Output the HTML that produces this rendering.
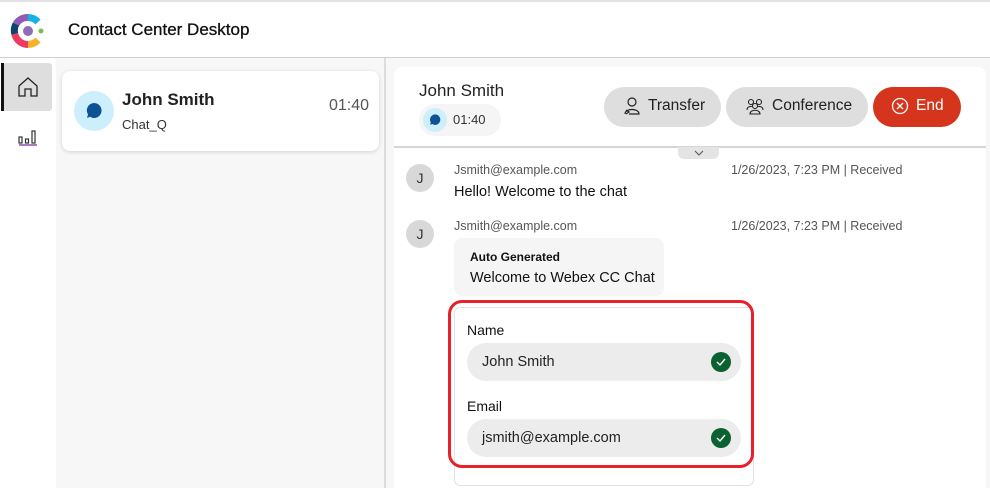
<!DOCTYPE html>
<html><head><meta charset="utf-8"><style>
*{box-sizing:border-box;margin:0;padding:0}
body{width:990px;height:488px;overflow:hidden;background:#fff;font-family:"Liberation Sans",Arial,sans-serif;color:#121212;position:relative}
.abs{position:absolute}
</style></head><body>
<div class="abs" style="left:0;top:0;width:990px;height:2px;background:#e2e2e2"></div>
<svg class="abs" style="left:10px;top:13px" width="36" height="36" viewBox="0 0 36 36">
<path d="M18 4.5 A13.5 13.5 0 0 0 6 11" stroke="#8e5cb3" stroke-width="7" fill="none"/>
<path d="M18 4.5 A13.5 13.5 0 0 1 28 9" stroke="#17b3e0" stroke-width="7" fill="none"/>
<path d="M6 11 A13.5 13.5 0 0 0 4.8 21" stroke="#10436b" stroke-width="7" fill="none"/>
<path d="M4.8 21 A13.5 13.5 0 0 0 18 31.5" stroke="#ee3a63" stroke-width="7" fill="none"/>
<path d="M18 31.5 A13.5 13.5 0 0 0 28 27" stroke="#f6b22b" stroke-width="7" fill="none"/>
<circle cx="18" cy="18" r="5" fill="#8e6cb8"/><circle cx="31" cy="18" r="2.5" fill="#76c14a"/>
</svg>
<div class="abs" style="left:68px;top:20px;font-size:17px;color:#111;-webkit-text-stroke:0.3px #111">Contact Center Desktop</div>
<div class="abs" style="left:0;top:57px;width:990px;height:1px;background:#d0d0d0"></div>
<div class="abs" style="left:3px;top:63px;width:49px;height:48px;background:#dedede;border-radius:3px"></div>
<div class="abs" style="left:1px;top:63px;width:3px;height:48px;background:#111"></div>
<svg class="abs" style="left:17px;top:76px" width="22" height="22" viewBox="0 0 22 22"><path d="M2 10 L11 2 L20 10 V20 H14 V13 H8 V20 H2 Z" fill="none" stroke="#222" stroke-width="1.3"/></svg>
<svg class="abs" style="left:18px;top:128px" width="20" height="18" viewBox="0 0 20 18"><g fill="none" stroke="#333" stroke-width="1.2"><rect x="1" y="9" width="3" height="6"/><rect x="7.5" y="11" width="3" height="4"/><rect x="14" y="3" width="3" height="12"/></g><path d="M1 17 H19" stroke="#7a2b9a" stroke-width="1.3"/></svg>
<div class="abs" style="left:56px;top:58px;width:328px;height:430px;background:#f7f7f7"></div>
<div class="abs" style="left:384px;top:58px;width:2px;height:430px;background:#dcdcdc"></div>
<div class="abs" style="left:62px;top:71px;width:317px;height:80px;background:#fff;border-radius:8px;box-shadow:0 1px 4px rgba(0,0,0,.15)"></div>
<div class="abs" style="left:74px;top:91px;width:40px;height:40px;border-radius:50%;background:#cdeefc"></div>
<svg class="abs" style="left:84px;top:101px" width="20" height="20" viewBox="0 0 20 20"><path d="M10 2 A7.5 7.5 0 1 1 6 15.8 L3 17 L4 13.5 A7.5 7.5 0 0 1 10 2Z" fill="#0b5394"/></svg>
<div class="abs" style="left:122px;top:90px;font-size:17px;font-weight:bold;color:#222">John Smith</div>
<div class="abs" style="left:122px;top:117px;font-size:13px;color:#333">Chat_Q</div>
<div class="abs" style="left:329px;top:97px;font-size:16px;color:#555">01:40</div>
<div class="abs" style="left:386px;top:58px;width:604px;height:430px;background:#f7f7f7"></div>
<div class="abs" style="left:394px;top:67px;width:592px;height:421px;background:#fff;border-radius:8px 8px 0 0"></div>
<div class="abs" style="left:419px;top:81px;font-size:17px;color:#222">John Smith</div>
<div class="abs" style="left:419px;top:104px;width:82px;height:32px;border-radius:16px;background:#f5f5f5"></div>
<div class="abs" style="left:423px;top:108px;width:24px;height:24px;border-radius:50%;background:#cdeefc"></div>
<svg class="abs" style="left:428px;top:113px" width="14" height="14" viewBox="0 0 20 20"><path d="M10 2 A7.5 7.5 0 1 1 6 15.8 L3 17 L4 13.5 A7.5 7.5 0 0 1 10 2Z" fill="#0b5394"/></svg>
<div class="abs" style="left:453px;top:112px;font-size:13px;color:#333">01:40</div>
<div class="abs" style="left:604px;top:87px;width:117px;height:40px;border-radius:20px;background:#dedede"></div>
<svg class="abs" style="left:623px;top:96px" width="18" height="20" viewBox="0 0 18 20"><g fill="none" stroke="#222" stroke-width="1.2"><circle cx="9" cy="6" r="4"/><path d="M2 18 C2 12 16 12 16 18 H6"/><path d="M3 14 L6 16 L3 18"/></g></svg>
<div class="abs" style="left:648px;top:97px;font-size:15.5px;color:#222">Transfer</div>
<div class="abs" style="left:726px;top:87px;width:142px;height:40px;border-radius:20px;background:#dedede"></div>
<svg class="abs" style="left:745px;top:97px" width="20" height="18" viewBox="0 0 20 18"><g fill="none" stroke="#222" stroke-width="1.1"><circle cx="6" cy="5" r="2.5"/><circle cx="14" cy="5" r="2.5"/><circle cx="10" cy="9" r="2.5"/><path d="M2 13 C2 9 7 9 7 10 M18 13 C18 9 13 9 13 10 M5 17 C5 12 15 12 15 17 Z"/></g></svg>
<div class="abs" style="left:772px;top:97px;font-size:15.5px;color:#222">Conference</div>
<div class="abs" style="left:873px;top:87px;width:88px;height:40px;border-radius:20px;background:#d4351c"></div>
<svg class="abs" style="left:891px;top:97px" width="18" height="18" viewBox="0 0 18 18"><g fill="none" stroke="#fff" stroke-width="1.3"><circle cx="9" cy="9" r="7.5"/><path d="M6 6 L12 12 M12 6 L6 12"/></g></svg>
<div class="abs" style="left:916px;top:97px;font-size:15.5px;color:#fff">End</div>
<div class="abs" style="left:394px;top:146px;width:592px;height:2px;background:#d6d6d6"></div>
<div class="abs" style="left:678px;top:147px;width:41px;height:12px;background:#e4e4e4;border-radius:0 0 6px 6px"></div>
<svg class="abs" style="left:694px;top:150px" width="10" height="6" viewBox="0 0 10 6"><path d="M1 1 L5 5 L9 1" fill="none" stroke="#555" stroke-width="1"/></svg>
<div class="abs" style="left:406px;top:164px;width:28px;height:28px;border-radius:50%;background:#d8d8d8;font-size:14px;color:#333;text-align:center;line-height:28px">J</div>
<div class="abs" style="left:454px;top:163px;font-size:12.5px;color:#555">Jsmith@example.com</div>
<div class="abs" style="left:731px;top:163px;font-size:12.5px;color:#555">1/26/2023, 7:23 PM | Received</div>
<div class="abs" style="left:454px;top:184px;font-size:14.5px;color:#111">Hello! Welcome to the chat</div>
<div class="abs" style="left:406px;top:220px;width:28px;height:28px;border-radius:50%;background:#d8d8d8;font-size:14px;color:#333;text-align:center;line-height:28px">J</div>
<div class="abs" style="left:454px;top:219px;font-size:12.5px;color:#555">Jsmith@example.com</div>
<div class="abs" style="left:731px;top:219px;font-size:12.5px;color:#555">1/26/2023, 7:23 PM | Received</div>
<div class="abs" style="left:454px;top:238px;width:210px;height:58px;background:#f5f5f5;border-radius:8px"></div>
<div class="abs" style="left:470px;top:250px;font-size:12px;font-weight:bold;color:#111">Auto Generated</div>
<div class="abs" style="left:470px;top:270px;font-size:14.5px;color:#111">Welcome to Webex CC Chat</div>
<div class="abs" style="left:454px;top:307px;width:300px;height:179px;border:1px solid #e2e2e2;border-radius:6px"></div>
<div class="abs" style="left:448px;top:300px;width:306px;height:168px;border:3px solid #e8202a;border-radius:14px"></div>
<div class="abs" style="left:467px;top:322px;font-size:14px;color:#111">Name</div>
<div class="abs" style="left:467px;top:343px;width:274px;height:38px;border-radius:19px;background:#ececec"></div>
<div class="abs" style="left:482px;top:354px;font-size:14.5px;color:#222">John Smith</div>
<div class="abs" style="left:711px;top:352px;width:20px;height:20px;border-radius:50%;background:#0a6132"></div>
<svg class="abs" style="left:715px;top:357px" width="12" height="10" viewBox="0 0 12 10"><path d="M2 5 L5 8 L10 2" fill="none" stroke="#fff" stroke-width="1.4"/></svg>
<div class="abs" style="left:467px;top:398px;font-size:14px;color:#111">Email</div>
<div class="abs" style="left:467px;top:419px;width:274px;height:38px;border-radius:19px;background:#ececec"></div>
<div class="abs" style="left:482px;top:430px;font-size:14.5px;color:#222">jsmith@example.com</div>
<div class="abs" style="left:711px;top:428px;width:20px;height:20px;border-radius:50%;background:#0a6132"></div>
<svg class="abs" style="left:715px;top:433px" width="12" height="10" viewBox="0 0 12 10"><path d="M2 5 L5 8 L10 2" fill="none" stroke="#fff" stroke-width="1.4"/></svg>
</body></html>
